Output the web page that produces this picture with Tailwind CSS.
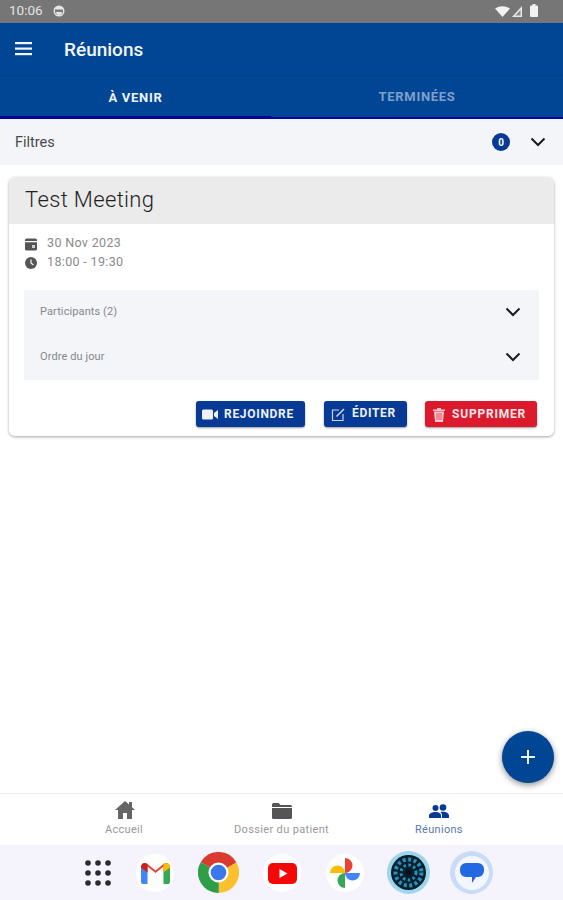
<!DOCTYPE html>
<html>
<head>
<meta charset="utf-8">
<script src="https://cdn.jsdelivr.net/npm/@tailwindcss/browser@4"></script>
</head>
<body class="bg-white">
<div class="relative w-[563px] h-[900px] overflow-hidden flex flex-col bg-white font-['Roboto',sans-serif]">
  <!-- status bar -->
  <div class="h-[23px] bg-[#767676] flex items-center pl-[9px] pr-[25px] shrink-0">
    <span class="text-[13.500px] text-[#e4e4e4] leading-none w-[33px] -mt-[1px]">10:06</span>
    <svg class="ml-[11px] -mt-[1px]" width="12" height="12" viewBox="0 0 12 12"><circle cx="6" cy="6" r="5.500" fill="#e6e6e6"/><path d="M2 4.500h8v1.500a4 4 0 0 1-8 0z" fill="#777"/><path d="M3 7h6a3 3 0 0 1-6 0z" fill="#e6e6e6"/></svg>
    <div class="ml-auto flex items-center">
      <svg width="15" height="11" viewBox="0 0 15 11"><path d="M0 2.500Q7.500 -2 15 2.500L7.500 11z" fill="#f2f2f2"/></svg>
      <svg class="ml-[2px]" width="10" height="11" viewBox="0 0 10 11"><path d="M10 0V11H0z" fill="#e8e8e8"/><path d="M8.500 4V9.500H3.500z" fill="#8a8a8a"/></svg>
      <svg class="ml-[8px] -mt-[2px]" width="8" height="13" viewBox="0 0 8 13"><path d="M2.500 0h3v1.500h1.500a1 1 0 0 1 1 1V12a1 1 0 0 1-1 1H1a1 1 0 0 1-1-1V2.500a1 1 0 0 1 1-1h1.500z" fill="#f2f2f2"/></svg>
    </div>
  </div>
  <!-- app bar -->
  <div class="h-[53px] bg-[#014694] flex items-center pl-[15px] shrink-0 border-b border-[#013f86]">
    <svg width="17" height="14" viewBox="0 0 17 14" fill="#f4f6fa"><rect y="0" width="17" height="2.200"/><rect y="5.500" width="17" height="2.200"/><rect y="11" width="17" height="2.200"/></svg>
    <span class="ml-[32px] text-[19px] font-medium text-[#f4f6fa] leading-none">Réunions</span>
  </div>
  <!-- tabs -->
  <div class="h-[43px] bg-[#014694] flex shrink-0 relative">
    <div class="w-[271px] h-full flex items-center justify-center border-b-[3px] border-[#0303a0]">
      <span class="text-[13px] font-bold tracking-[0.7px] text-[#eef2f8] mt-[3px]">À VENIR</span>
    </div>
    <div class="flex-1 h-full flex items-center justify-center border-b-2 border-[#0303a0]">
      <span class="text-[13px] font-bold tracking-[0.7px] text-[#7f9fc9] mt-[1px]">TERMINÉES</span>
    </div>
  </div>
  <!-- filter -->
  <div class="h-[46px] bg-[#f3f5f9] flex items-center pl-[15px] pr-[17px] shrink-0">
    <span class="text-[14.500px] text-[#4a4a4a] mt-[1px]">Filtres</span>
    <span class="ml-auto w-[18px] h-[18px] rounded-full bg-[#063a94] text-white text-[10px] font-bold flex items-center justify-center">0</span>
    <svg class="ml-[20px]" width="16" height="10" viewBox="0 0 16 10" fill="none" stroke="#1c1c1c" stroke-width="2"><path d="M1.500 1.500L8 8l6.500-6.500"/></svg>
  </div>
  <!-- main -->
  <div class="flex-1 pt-[12px] px-[9px]">
    <div class="w-[545px] h-[259px] rounded-[6px] bg-white shadow-[0_1px_3px_rgba(0,0,0,0.35)] overflow-hidden flex flex-col">
      <div class="h-[47px] bg-[#ebebeb] flex items-center pl-[16px] shrink-0">
        <span class="text-[22px] font-light text-[#1f1f1f] tracking-[0.35px] leading-none -mt-[2px]">Test Meeting</span>
      </div>
      <div class="pl-[15px] pr-[15px] pt-[10px] flex flex-col flex-1">
        <div class="flex items-center h-[19px]">
          <svg width="14" height="14" viewBox="0 0 14 14"><path d="M1 3a1.500 1.500 0 0 1 1.500-1.500h9A1.500 1.500 0 0 1 13 3v1H1z" fill="#555"/><path d="M1 5.200h12V12a1.500 1.500 0 0 1-1.500 1.500h-9A1.500 1.500 0 0 1 1 12z" fill="#555"/><rect x="8" y="8" width="3" height="3" fill="#ccc"/></svg>
          <span class="ml-[9px] text-[12.500px] text-[#8a8a8a] tracking-[0.35px]">30 Nov 2023</span>
        </div>
        <div class="flex items-center h-[19px]">
          <svg width="14" height="14" viewBox="0 0 14 14"><circle cx="7" cy="7" r="6" fill="#555"/><path d="M7 3.500V7l2.500 2" stroke="#eee" stroke-width="1.300" fill="none"/></svg>
          <span class="ml-[9px] text-[12.500px] text-[#8a8a8a] tracking-[0.35px]">18:00 - 19:30</span>
        </div>
        <div class="mt-[18px] h-[90px] bg-[#f3f5f9] flex flex-col">
          <div class="h-[44px] flex items-center pl-[16px] pr-[18px]">
            <span class="text-[11px] text-[#888] tracking-[0.1px] mt-[1px]">Participants (2)</span>
            <svg class="ml-auto" width="16" height="10" viewBox="0 0 16 10" fill="none" stroke="#1c1c1c" stroke-width="2"><path d="M1.500 1.500L8 8l6.500-6.500"/></svg>
          </div>
          <div class="h-[46px] flex items-center pl-[16px] pr-[18px]">
            <span class="text-[11px] text-[#888] tracking-[0.1px]">Ordre du jour</span>
            <svg class="ml-auto" width="16" height="10" viewBox="0 0 16 10" fill="none" stroke="#1c1c1c" stroke-width="2"><path d="M1.500 1.500L8 8l6.500-6.500"/></svg>
          </div>
        </div>
        <div class="mt-[21px] flex pl-[172px]">
          <div class="w-[109px] h-[26px] rounded-[3px] bg-[#063a94] shadow-[0_1px_2px_rgba(0,0,0,0.4)] flex items-center pl-[6px]">
            <svg width="16" height="11" viewBox="0 0 16 11" fill="#eef2f8"><rect y="0.500" width="11" height="10" rx="1.500"/><path d="M12 4l4-3v9l-4-3z"/></svg>
            <span class="ml-[6px] text-[12px] font-bold tracking-[0.7px] text-[#eef2f8]">REJOINDRE</span>
          </div>
          <div class="ml-[19px] w-[83px] h-[26px] rounded-[3px] bg-[#063a94] shadow-[0_1px_2px_rgba(0,0,0,0.4)] flex items-center pl-[7px]">
            <svg width="15" height="15" viewBox="0 0 15 15" fill="none" stroke="#c9d6ec" stroke-width="1.200"><path d="M8 3H1.500v10.500H12V7"/><path d="M5.500 9.500L13 2" stroke-width="1.600"/></svg>
            <span class="ml-[6px] text-[12px] font-bold tracking-[0.7px] text-[#eef2f8] -mt-[2px]">ÉDITER</span>
          </div>
          <div class="ml-[18px] w-[112px] h-[26px] rounded-[3px] bg-[#dc1a2e] shadow-[0_1px_2px_rgba(0,0,0,0.4)] flex items-center pl-[8px]">
            <svg width="12" height="15" viewBox="0 0 12 15"><path d="M0 2.500h12v1.500H0zM4 1h4v1.500H4zM1 4.500h10L10 15H2z" fill="#f6c8cd"/><path d="M4 6v7M6 6v7M8 6v7" stroke="#dc1a2e" stroke-width=".7"/></svg>
            <span class="ml-[7px] text-[12px] font-bold tracking-[0.8px] text-[#f8e6e8] -mt-[1px]">SUPPRIMER</span>
          </div>
        </div>
      </div>
    </div>
  </div>
  <!-- bottom nav -->
  <div class="h-[52px] bg-white border-t border-[#eeeeee] flex shrink-0 relative">
    <div class="absolute left-[105px] top-[7px] w-[40px] flex flex-col items-center">
      <svg width="20" height="18" viewBox="0 0 20 18"><path d="M10 0L0 9h3v9h5v-6h4v6h5V9h3l-3-2.700V1h-3v2.600z" fill="#666"/></svg>
    </div>
    <span class="absolute left-[105px] top-[28px] text-[11px] tracking-[0.3px] text-[#999]">Accueil</span>
    <div class="absolute left-[272px] top-[9px]">
      <svg width="20" height="16" viewBox="0 0 20 16"><path d="M0 1.500A1.500 1.500 0 0 1 1.500 0h5L8.500 2H18.500A1.500 1.500 0 0 1 20 3.500V4H0z" fill="#555"/><path d="M0 5h20v9.500a1.500 1.500 0 0 1-1.500 1.500h-17A1.500 1.500 0 0 1 0 14.500z" fill="#555"/></svg>
    </div>
    <span class="absolute left-[234px] top-[28px] text-[11px] tracking-[0.35px] text-[#999]">Dossier du patient</span>
    <div class="absolute left-[429px] top-[10px]">
      <svg width="20" height="15" viewBox="0 0 20 15" fill="#063a94"><circle cx="6.500" cy="4" r="3"/><circle cx="14" cy="3.500" r="3.300"/><path d="M0 14v-2.500C0 9.500 3.500 8 6.500 8S12 9.500 12 11.500V14z"/><path d="M13 14v-2.500c0-1.500-.6-2.500-1.600-3.400C12.300 7.800 13.200 7.700 14 7.700c3 0 6 1.600 6 3.800V14z"/></svg>
    </div>
    <span class="absolute left-[415px] top-[28px] text-[11px] tracking-[0.3px] text-[#5d78ab]">Réunions</span>
  </div>
  <!-- dock -->
  <div class="h-[55px] bg-[#f5f4fc] shrink-0 relative">
    <svg class="absolute left-[85px] top-[15px]" width="26" height="26" viewBox="0 0 26 26" fill="#2a2a2e"><circle cx="3" cy="3" r="2.800"/><circle cx="13" cy="3" r="2.800"/><circle cx="23" cy="3" r="2.800"/><circle cx="3" cy="13" r="2.800"/><circle cx="13" cy="13" r="2.800"/><circle cx="23" cy="13" r="2.800"/><circle cx="3" cy="23" r="2.800"/><circle cx="13" cy="23" r="2.800"/><circle cx="23" cy="23" r="2.800"/></svg>
    <!-- gmail -->
    <div class="absolute left-[136px] top-[9px] w-[38px] h-[38px] rounded-full bg-white flex items-center justify-center">
      <svg width="29" height="24" viewBox="0 0 29 24"><path d="M0 6V21a2 2 0 0 0 2 2h4.500V10.500z" fill="#4285f4"/><path d="M29 6V21a2 2 0 0 1-2 2h-4.500V10.500z" fill="#34a853"/><path d="M0 6.500C0 2 4 1 6.500 3L14.500 9.500 22.500 3C25 1 29 2 29 6.500L22.500 11.500V5.500L14.500 12 6.500 5.500V11.500z" fill="#ea4335"/><path d="M22.500 3C25 1 29 2 29 6.500L22.500 11.500z" fill="#fbbc04"/><path d="M0 6.500C0 4 1.500 2.200 3.500 2.100L6.500 3V11.500z" fill="#c5221f"/></svg>
    </div>
    <!-- chrome -->
    <svg class="absolute left-[198px] top-[7px]" width="41" height="41" viewBox="0 0 42 42"><path d="M21 21L2.800 10.500A21 21 0 0 1 39.200 10.500z" fill="#db3a2f"/><path d="M21 21L39.200 10.500A21 21 0 0 1 21 42z" fill="#fbc02d"/><path d="M21 21L21 42A21 21 0 0 1 2.800 10.500z" fill="#2e9e48"/><path d="M21 21L39.200 10.500H21z" fill="#db3a2f"/><path d="M21 21L11.900 36.750 21 42z" fill="#2e9e48"/><circle cx="21" cy="21" r="10.300" fill="#fff"/><circle cx="21" cy="21" r="8" fill="#3b78e7"/></svg>
    <!-- youtube -->
    <div class="absolute left-[263px] top-[9px] w-[38px] h-[38px] rounded-full bg-white flex items-center justify-center">
      <svg width="29" height="21" viewBox="0 0 29 21"><rect width="29" height="21" rx="5" fill="#f40808"/><path d="M11.500 6l8 4.500-8 4.500z" fill="#fff"/></svg>
    </div>
    <!-- photos -->
    <div class="absolute left-[326px] top-[9px] w-[38px] h-[38px] rounded-full bg-white flex items-center justify-center">
      <svg width="30" height="30" viewBox="0 0 30 30"><path d="M15 15H0A7.500 7.500 0 0 1 15 15z" fill="#fbbc04"/><path d="M15 0A7.500 7.500 0 0 1 15 15z" fill="#ea4335"/><path d="M15 15H30A7.500 7.500 0 0 1 15 15z" fill="#4285f4"/><path d="M15 15V30A7.500 7.500 0 0 1 15 15z" fill="#34a853"/></svg>
    </div>
    <!-- dark app -->
    <div class="absolute left-[387px] top-[6px] w-[43px] h-[43px] rounded-full bg-[#9cd5ec] flex items-center justify-center">
      <svg width="35" height="35" viewBox="0 0 35 35"><circle cx="17.500" cy="17.500" r="17.500" fill="#06202e"/><circle cx="17.500" cy="17.500" r="13" fill="none" stroke="#2a8fb8" stroke-width="4" stroke-dasharray="3 2.500"/><circle cx="17.500" cy="17.500" r="7.500" fill="none" stroke="#2a8fb8" stroke-width="3" stroke-dasharray="2.500 2.500"/><circle cx="17.500" cy="17.500" r="3" fill="#04121a"/></svg>
    </div>
    <!-- messages -->
    <div class="absolute left-[450px] top-[6px] w-[43px] h-[43px] rounded-full bg-[#c9dbf7] flex items-center justify-center">
      <div class="w-[34px] h-[34px] rounded-full bg-[#f3f6fd] flex items-center justify-center">
        <svg width="24" height="22" viewBox="0 0 24 22"><path d="M6 1h12a6 6 0 0 1 6 6v2a6 6 0 0 1-6 6h-2l-4 6v-6H6a6 6 0 0 1-6-6V7a6 6 0 0 1 6-6z" fill="#2368e0"/></svg>
      </div>
    </div>
  </div>
  <!-- FAB -->
  <div class="absolute left-[502px] top-[731px] w-[52px] h-[52px] rounded-full bg-[#014694] shadow-[0_2px_6px_rgba(0,0,0,0.45)] flex items-center justify-center">
    <svg width="14" height="14" viewBox="0 0 14 14" fill="#eef2f8"><rect x="6" width="2" height="14"/><rect y="6" width="14" height="2"/></svg>
  </div>
</div>
</body>
</html>
